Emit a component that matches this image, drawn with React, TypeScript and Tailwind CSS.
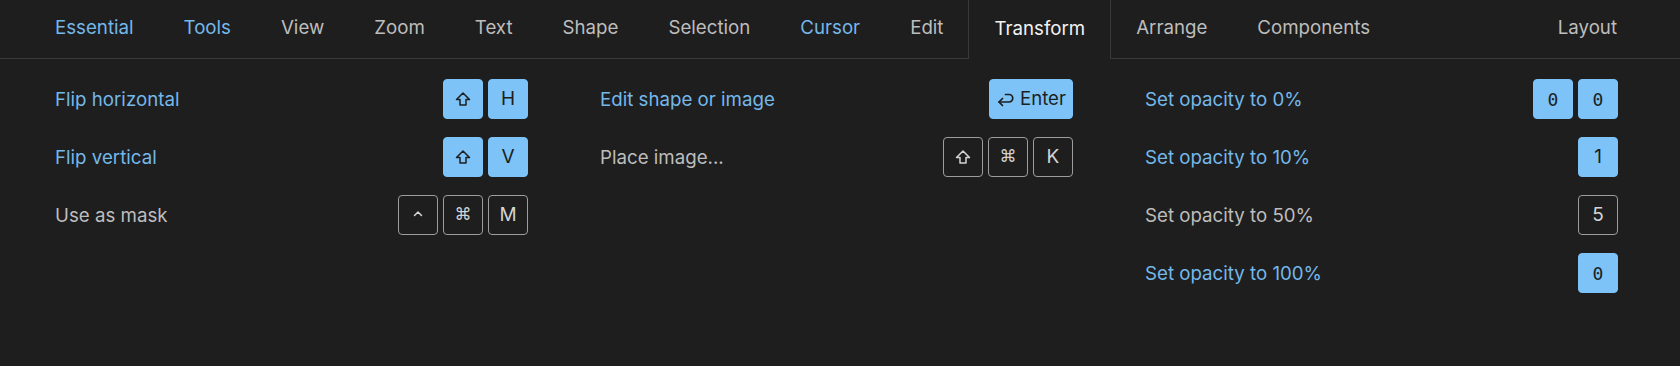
import React from 'react';

type Key = { label: string; kind?: 'shift' | 'cmd' | 'ctrl' | 'enter' | 'mono' };

interface Shortcut {
  label: string;
  active: boolean;
  keys: Key[];
}

const tabs = [
  { name: 'Essential', tone: 'blue' },
  { name: 'Tools', tone: 'blue' },
  { name: 'View', tone: 'gray' },
  { name: 'Zoom', tone: 'gray' },
  { name: 'Text', tone: 'gray' },
  { name: 'Shape', tone: 'gray' },
  { name: 'Selection', tone: 'gray' },
  { name: 'Cursor', tone: 'blue' },
  { name: 'Edit', tone: 'gray' },
  { name: 'Transform', tone: 'active' },
  { name: 'Arrange', tone: 'gray' },
  { name: 'Components', tone: 'gray' },
];

const columns: Shortcut[][] = [
  [
    { label: 'Flip horizontal', active: true, keys: [{ label: '', kind: 'shift' }, { label: 'H' }] },
    { label: 'Flip vertical', active: true, keys: [{ label: '', kind: 'shift' }, { label: 'V' }] },
    { label: 'Use as mask', active: false, keys: [{ label: '', kind: 'ctrl' }, { label: '', kind: 'cmd' }, { label: 'M' }] },
  ],
  [
    { label: 'Edit shape or image', active: true, keys: [{ label: 'Enter', kind: 'enter' }] },
    { label: 'Place image...', active: false, keys: [{ label: '', kind: 'shift' }, { label: '', kind: 'cmd' }, { label: 'K' }] },
  ],
  [
    { label: 'Set opacity to 0%', active: true, keys: [{ label: '0', kind: 'mono' }, { label: '0', kind: 'mono' }] },
    { label: 'Set opacity to 10%', active: true, keys: [{ label: '1' }] },
    { label: 'Set opacity to 50%', active: false, keys: [{ label: '5' }] },
    { label: 'Set opacity to 100%', active: true, keys: [{ label: '0', kind: 'mono' }] },
  ],
];

const ShiftIcon = () => (
  <svg width="16" height="16" viewBox="0 0 16 16" fill="none" stroke="currentColor" strokeWidth="1.5" strokeLinejoin="round">
    <path d="M8 2 L14.5 8.5 H11 V14 H5 V8.5 H1.5 Z" />
  </svg>
);

const CtrlIcon = () => (
  <svg width="12" height="12" viewBox="0 0 12 12" fill="none" stroke="currentColor" strokeWidth="1.5" strokeLinecap="round" strokeLinejoin="round">
    <path d="M2.5 6.5 L6 3 L9.5 6.5" />
  </svg>
);

const EnterIcon = () => (
  <svg width="20" height="18" viewBox="0 0 20 18" fill="none" stroke="currentColor" strokeWidth="1.7" strokeLinecap="round" strokeLinejoin="round">
    <path d="M3 12 H13 a3.75 3.75 0 0 0 0 -7.5 H9.5" />
    <path d="M6.5 8.5 L3 12 L6.5 15.5" />
  </svg>
);

const KeyCap = ({ k, active }: { k: Key; active: boolean }) => {
  const base = active
    ? 'bg-[#7dc3f7] text-[#1c1f22] border-[1.5px] border-[#7dc3f7]'
    : 'border-[1.5px] border-[#9d9d9d] text-[#d4d4d4]';
  if (k.kind === 'enter') {
    return (
      <div className={`flex h-[40px] w-[84px] items-center justify-center gap-[4px] rounded-[4px] text-[18.6px] ${base}`}>
        <EnterIcon />
        <span>{k.label}</span>
      </div>
    );
  }
  return (
    <div className={`flex h-[40px] w-[40px] items-center justify-center rounded-[4px] ${base}`}>
      {k.kind === 'shift' && <ShiftIcon />}
      {k.kind === 'ctrl' && <CtrlIcon />}
      {k.kind === 'cmd' && <span className="text-[17px] font-['DejaVu_Sans',sans-serif]">⌘</span>}
      {k.kind === 'mono' && <span className="text-[18px] font-['DejaVu_Sans_Mono',monospace]">{k.label}</span>}
      {!k.kind && <span className="text-[19px]">{k.label}</span>}
    </div>
  );
};

export default function App() {
  return (
    <div className="min-h-screen w-full bg-[#1e1e1e] font-['Inter','Noto_Sans',sans-serif] text-[18.7px] antialiased">
      <nav className="flex h-[59px] border-b border-[#393939] pl-[30px] pr-[38px]">
        {tabs.map((t) =>
          t.tone === 'active' ? (
            <div
              key={t.name}
              className="-mb-px flex items-center border-x border-[#393939] bg-[#1e1e1e] px-[25px] pb-[1px] text-[#f2f2f2]"
            >
              {t.name}
            </div>
          ) : (
            <div
              key={t.name}
              className={`flex items-center px-[25px] pb-[1px] ${t.tone === 'blue' ? 'text-[#74b8ea]' : 'text-[#bdbdbd]'}`}
            >
              {t.name}
            </div>
          )
        )}
        <div className="ml-auto flex items-center px-[25px] pb-[1px] text-[#bdbdbd]">Layout</div>
      </nav>

      <div className="grid grid-cols-3 gap-x-[72px] pl-[55px] pr-[62px] pt-[20px]">
        {columns.map((col, i) => (
          <div key={i} className="flex flex-col gap-[18px]">
            {col.map((s) => (
              <div key={s.label} className="flex h-[40px] items-center justify-between">
                <span className={`pt-[3px] ${s.active ? 'text-[#74b8ea]' : 'text-[#bdbdbd]'}`}>{s.label}</span>
                <div className="flex gap-[5px]">
                  {s.keys.map((k, j) => (
                    <KeyCap key={j} k={k} active={s.active} />
                  ))}
                </div>
              </div>
            ))}
          </div>
        ))}
      </div>
    </div>
  );
}
